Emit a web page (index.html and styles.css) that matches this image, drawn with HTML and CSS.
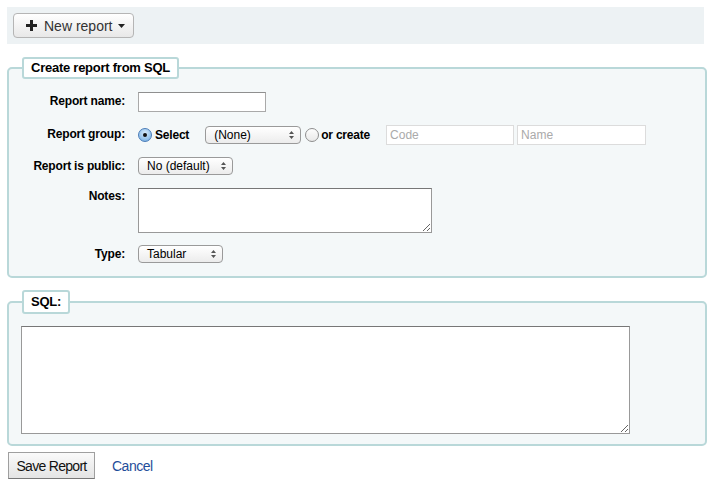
FILE: index.html
```html
<!DOCTYPE html>
<html>
<head>
<meta charset="utf-8">
<link rel="stylesheet" href="styles.css">
</head>
<body>
<div class="toolbar">
  <button class="btn-new" type="button">
    <svg class="plus" width="11" height="11" viewBox="0 0 11 11"><path d="M4 0h3v4h4v3H7v4H4V7H0V4h4z" fill="#222"/></svg>
    <span class="btn-label">New report</span>
    <svg class="caret" width="7" height="4" viewBox="0 0 7 4"><path d="M0 0h7L3.5 4z" fill="#222"/></svg>
  </button>
</div>
<form class="report-form">
  <fieldset class="fs fs-create">
    <legend class="lg">Create report from SQL</legend>
    <div class="row row-name">
      <label class="lbl">Report name:</label>
      <input class="txt txt-name" type="text">
    </div>
    <div class="row row-group">
      <label class="lbl">Report group:</label>
      <div class="ctrls">
        <span class="radio radio-on"><span class="dot"></span></span>
        <span class="rtext">Select</span>
        <span class="sel sel-none"><span class="sel-text">(None)</span><svg class="arr" width="5" height="8" viewBox="0 0 5 8"><path d="M0 3h5L2.5 0zM0 5h5L2.5 8z" fill="#555"/></svg></span>
        <span class="radio radio-off"></span>
        <span class="rtext rtext-create">or create</span>
        <input class="txt txt-light txt-code" type="text" placeholder="Code">
        <input class="txt txt-light txt-nm" type="text" placeholder="Name">
      </div>
    </div>
    <div class="row row-public">
      <label class="lbl">Report is public:</label>
      <span class="sel sel-public"><span class="sel-text">No (default)</span><svg class="arr" width="5" height="8" viewBox="0 0 5 8"><path d="M0 3h5L2.5 0zM0 5h5L2.5 8z" fill="#555"/></svg></span>
    </div>
    <div class="row row-notes">
      <label class="lbl">Notes:</label>
      <textarea class="ta ta-notes"></textarea>
    </div>
    <div class="row row-type">
      <label class="lbl">Type:</label>
      <span class="sel sel-type"><span class="sel-text">Tabular</span><svg class="arr" width="5" height="8" viewBox="0 0 5 8"><path d="M0 3h5L2.5 0zM0 5h5L2.5 8z" fill="#555"/></svg></span>
    </div>
  </fieldset>
  <fieldset class="fs fs-sql">
    <legend class="lg lg-sql">SQL:</legend>
    <textarea class="ta ta-sql"></textarea>
  </fieldset>
  <div class="actions">
    <button class="btn-save" type="button">Save Report</button>
    <a class="cancel" href="#">Cancel</a>
  </div>
</form>
</body>
</html>
```
FILE: styles.css
```css
html, body {
  margin: 0;
  padding: 0;
  background: #ffffff;
}
body {
  font-family: "Liberation Sans", Arial, sans-serif;
  font-size: 12px;
  color: #000;
}
.toolbar {
  margin: 7px 6px 0 7px;
  padding: 6px;
  background: #edf2f4;
  height: 25px;
}
.btn-new {
  display: flex;
  align-items: center;
  height: 25px;
  width: 121px;
  box-sizing: border-box;
  padding: 0 0 0 12px;
  border: 1px solid #b5b5b5;
  border-radius: 4px;
  background: linear-gradient(#ffffff, #e8e8e8);
  font-family: "Liberation Sans", Arial, sans-serif;
  font-size: 14px;
  color: #333;
  cursor: pointer;
}
.plus { margin-right: 7px; }
.btn-label { margin-right: 6px; }
.report-form { margin: 0; }
.fs {
  margin: 13px 3px 0 7px;
  padding: 0;
  border: 2px solid #b9d8d9;
  border-radius: 5px;
  background: #f4f8f9;
  min-inline-size: 0;
}
.lg {
  margin-left: 13px;
  padding: 1px 7px 2px;
  border: 2px solid #b9d8d9;
  border-radius: 3px;
  background: #fff;
  font-weight: bold;
  font-size: 13px;
  letter-spacing: -0.25px;
  line-height: 15px;
}
.lg-sql { padding: 2px 7px 3px; }
.fs-create {
  padding: 13px 0 13px 0;
}
.row {
  display: flex;
  align-items: flex-start;
  margin-bottom: 13px;
}
.row:last-child { margin-bottom: 0; }
.row-type { margin-top: -1px; }
.lbl {
  width: 116px;
  flex: none;
  text-align: right;
  font-weight: bold;
  letter-spacing: -0.18px;
  padding-top: 1px;
  line-height: 16px;
  margin-right: 13px;
}
.row-notes .lbl { padding-top: 0; }
.txt {
  box-sizing: border-box;
  margin: 0;
  height: 20px;
  border: 1px solid #a9a9a9;
  border-top-color: #8f8f8f;
  background: #fff;
  font-family: "Liberation Sans", Arial, sans-serif;
  font-size: 12px;
  padding: 1px 3px;
  outline: none;
}
.txt-name { width: 128px; }
.ctrls {
  display: flex;
  align-items: center;
  height: 19px;
}
.radio {
  box-sizing: border-box;
  width: 14px;
  height: 14px;
  border-radius: 50%;
  flex: none;
  display: flex;
  align-items: center;
  justify-content: center;
}
.radio-on {
  border: 1px solid #4a7cb8;
  background: radial-gradient(circle at 50% 35%, #d9ecfb, #8cbde9 70%, #5d9ad8);
}
.radio-on .dot {
  width: 4px;
  height: 4px;
  border-radius: 50%;
  background: #111;
}
.radio-off {
  border: 1px solid #8e8e8e;
  background: linear-gradient(#fdfdfd, #e9e9e9);
  margin-left: 4px;
}
.rtext {
  font-weight: bold;
  letter-spacing: -0.2px;
  margin-left: 3px;
}
.rtext-create { margin-left: 2px; margin-right: 16px; }
.sel {
  position: relative;
  box-sizing: border-box;
  display: flex;
  align-items: center;
  height: 18px;
  border: 1px solid #9a9a9a;
  border-radius: 4px;
  background: linear-gradient(#ffffff, #ececec);
  padding-left: 8px;
  font-size: 12px;
}
.sel .arr {
  position: absolute;
  right: 6px;
  top: 4px;
}
.sel-none { width: 96px; margin-left: 16px; }
.sel-public { width: 95px; }
.sel-type { width: 85px; }
.txt-light {
  height: 20px;
  border: 1px solid #dcdcdc;
  color: #333;
}
.txt-light::placeholder { color: #aaa; }
.txt-code { width: 128px; margin-right: 3px; }
.txt-nm { width: 129px; }
.ta {
  box-sizing: border-box;
  margin: 0;
  border: 1px solid #999;
  border-top-color: #777;
  background: #fff;
  display: block;
  font-family: "Liberation Mono", monospace;
  font-size: 12px;
  outline: none;
}
.ta-notes { width: 294px; height: 45px; }
.fs-sql {
  margin-top: 12px;
  padding: 12px 0 10px 0;
}
.ta-sql { width: 609px; height: 108px; margin-left: 12px; }
.actions {
  display: flex;
  align-items: center;
  margin: 6px 0 0 8px;
}
.btn-save {
  box-sizing: border-box;
  height: 27px;
  width: 87px;
  margin: 0;
  padding: 0;
  border: 1px solid #9f9f9f;
  border-bottom-color: #777;
  background: linear-gradient(#fafafa, #e4e4e4);
  font-family: "Liberation Sans", Arial, sans-serif;
  font-size: 14px;
  letter-spacing: -0.7px;
  color: #111;
  cursor: pointer;
}
.cancel {
  margin-left: 17px;
  font-family: "Liberation Sans", Arial, sans-serif;
  font-size: 14px;
  letter-spacing: -0.5px;
  color: #1f4d9a;
  text-decoration: none;
}
```
